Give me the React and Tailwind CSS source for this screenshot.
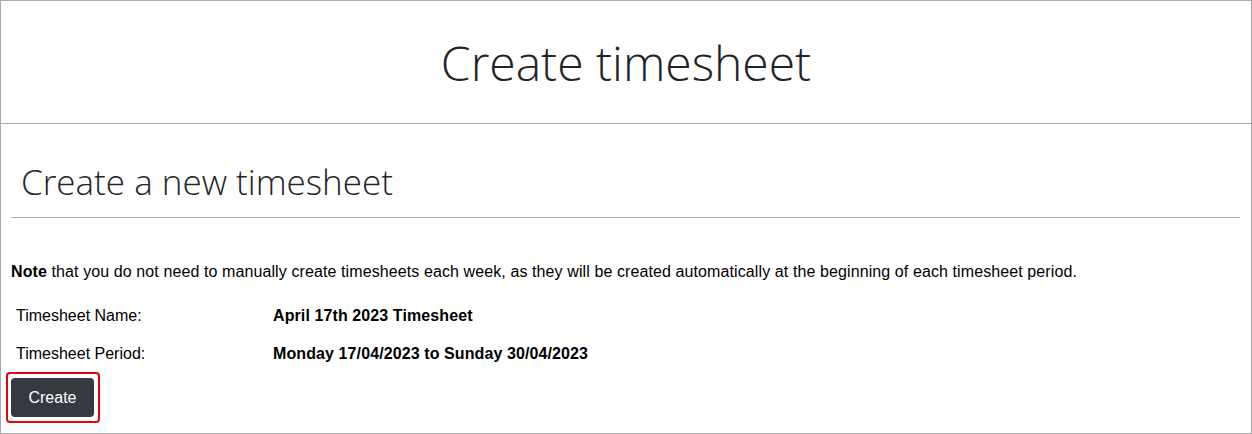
export default function App() {
    return (
        <div className="w-[1252px] h-[434px] border border-[#aaaaaa] bg-white text-[#212529] overflow-hidden" style={{ fontFamily: '"Liberation Sans", Arial, sans-serif' }}>
            <header className="h-[123px] border-b border-[#aaaaaa] flex items-center justify-center">
                <h1 className="text-[48px] font-light leading-none text-[#212529] mt-[2px]" style={{ fontFamily: '"Open Sans", sans-serif' }}>
                    Create timesheet
                </h1>
            </header>

            <main className="px-[10px]">
                <h2 className="pt-[40px] pb-[18px] pl-[10px] text-[35px] font-light leading-none text-[#212529]" style={{ fontFamily: '"Open Sans", sans-serif' }}>
                    Create a new timesheet
                </h2>
                <hr className="border-0 border-t border-[#aaaaaa] mr-[1px]" />

                <p className="mt-[45px] text-[16px] leading-[18px] tracking-[0.1px] text-black">
                    <b>Note</b> that you do not need to manually create timesheets each week, as they will be created automatically at the beginning of each timesheet period.
                </p>

                <div className="mt-[26px] text-[16px] leading-[18px] text-black">
                    <div className="flex h-[38px] items-start">
                        <div className="w-[262px] pl-[5px]">Timesheet Name:</div>
                        <div className="font-bold tracking-[0.1px]">April 17th 2023 Timesheet</div>
                    </div>
                    <div className="flex h-[18px] items-start">
                        <div className="w-[262px] pl-[5px]">Timesheet Period:</div>
                        <div className="font-bold tracking-[0.1px]">Monday 17/04/2023 to Sunday 30/04/2023</div>
                    </div>
                </div>

                <div className="ml-[-5px] mt-[9px] inline-flex rounded-[4px] border-2 border-[#e8000b] pl-[3px] pr-[4px] py-[4px]">
                    <button className="h-[39px] w-[83px] rounded-[4px] bg-[#343a40] text-[16px] text-white">
                        Create
                    </button>
                </div>
            </main>
        </div>
    )
}
